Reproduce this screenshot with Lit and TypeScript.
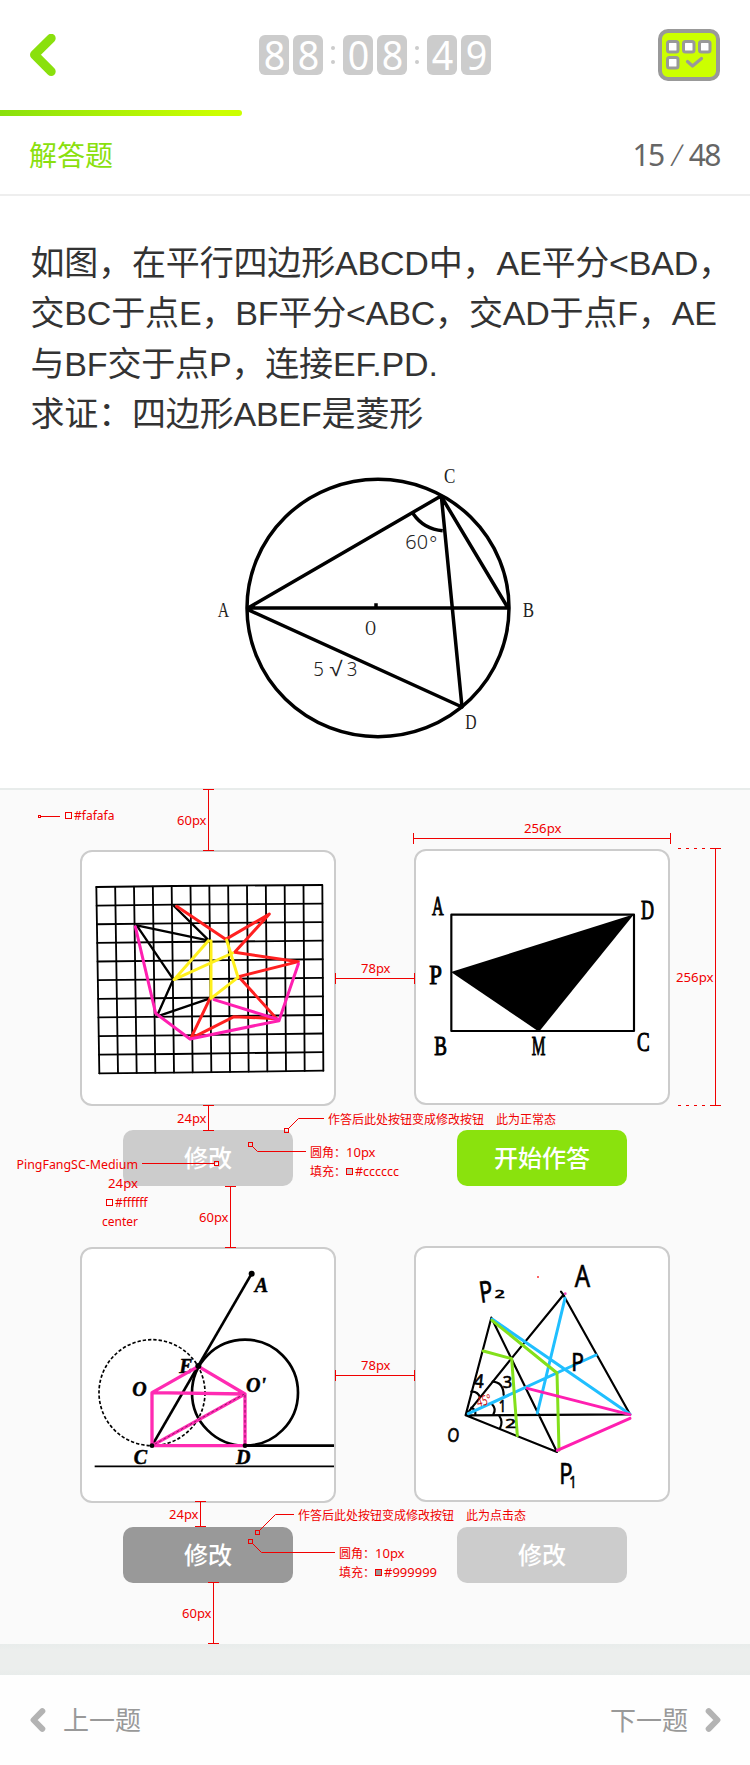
import { LitElement, html, svg, css } from "lit";
import { customElement, property } from "lit/decorators.js";

const RED = "#f00000";

type Pt = [number, number];

/* ---------- geometry figures ---------- */

@customElement("circle-figure")
class CircleFigure extends LitElement {
  static styles = css`
    :host { display: block; }
    svg { display: block; }
    .ink { fill: none; stroke: #000; stroke-width: 10.5; stroke-linejoin: round; }
    .label { font-family: "Liberation Serif", serif; font-size: 66px; fill: #222; }
    .num { font-family: "Noto Sans", sans-serif; font-weight: 300; font-size: 62px; fill: #222; }
  `;
  render() {
    const labels: [string, number, number, number][] = [
      ["C", 732, 99, 34], ["60", 616, 298, 68], ["°", 688, 304, 24], ["A", 53, 501, 34],
      ["B", 968, 501, 34], ["O", 496, 554, 32], ["5", 340, 678, 32], ["√", 388, 678, 40],
      ["3", 440, 678, 32], ["D", 796, 836, 34],
    ];
    return html`<svg width="350" height="300" viewBox="0 0 1050 900">
      <ellipse class="ink" cx="534" cy="474" rx="393" ry="386" />
      <path class="ink" d="M924 474H144L723 138L924 474M144 479L786 771L724 138M528 474V460M640 192Q672 238 728 242" />
      ${labels.map(([t, x, y, w]) => svg`<text class=${/[0-9°√]/.test(t) ? "num" : "label"} x=${x} y=${y} textLength=${w} lengthAdjust="spacingAndGlyphs">${t}</text>`)}
    </svg>`;
  }
}

@customElement("grid-figure")
class GridFigure extends LitElement {
  static styles = css`
    :host, svg { display: block; }
    .line { fill: none; stroke-linejoin: round; stroke-linecap: round; }
    .grid { stroke: #000; stroke-width: 5.5; }
    .black { stroke: #000; stroke-width: 7; }
    .red { stroke: #ff2020; stroke-width: 9; }
    .pink { stroke: #ff1fb0; stroke-width: 9; }
    .yellow { stroke: #fff01c; stroke-width: 9; }
  `;
  render() {
    const cols = Array.from({ length: 13 }, (_, i) => i / 12);
    const rows = Array.from({ length: 11 }, (_, i) => i / 10);
    return html`<svg width="252" height="252" viewBox="246 216 756 756">
      ${cols.map(t => svg`<line class="line grid" x1=${289 + 678 * t} y1=${321 - 4 * t} x2=${298 + 672 * t} y2=${880 - 8 * t} />`)}
      ${rows.map(t => svg`<path class="line grid" d="M${289 + 9 * t} ${321 + 559 * t}L${520 + 3 * t} ${318 + 560 * t}L${967 + 3 * t} ${315 + 557 * t}" />`)}
      <path class="line black" d="M522 378L627 482L410 436L520 598L470 710L630 655" />
      <path class="line red" d="M530 379L677 478L808 402L704 517L895 545L716 590L830 716L702 710L572 776L630 655" />
      <path class="line pink" d="M406 440L467 700L570 777L837 722L895 552M642 659L837 719" />
      <path class="line yellow" d="M625 482L522 599L698 519M633 482V655L714 592L680 480" />
    </svg>`;
  }
}

@customElement("rect-figure")
class RectFigure extends LitElement {
  static styles = css`
    :host, svg { display: block; }
    .frame { fill: none; stroke: #000; stroke-width: 6.5; stroke-linejoin: round; }
    .label { font-family: "Liberation Serif", serif; font-size: 79px; fill: #000; stroke: #000; stroke-width: 3; }
  `;
  render() {
    const labels: [string, number, number, number][] = [
      ["A", 171, 406, 35], ["D", 798, 417, 39], ["P", 163, 612, 38],
      ["B", 178, 824, 38], ["M", 470, 826, 41], ["C", 786, 812, 38],
    ];
    return html`<svg width="252" height="252" viewBox="123 213 756 756">
      <rect class="frame" x="229" y="404" width="548" height="349" />
      <path d="M228 576L777 403L492 755Z" />
      ${labels.map(([t, x, y, w]) => svg`<text class="label" x=${x} y=${y} textLength=${w} lengthAdjust="spacingAndGlyphs">${t}</text>`)}
    </svg>`;
  }
}

@customElement("tangent-figure")
class TangentFigure extends LitElement {
  static styles = css`
    :host, svg { display: block; }
    .ink { fill: none; stroke: #000; }
    .bold { stroke-width: 8; }
    .thin { stroke-width: 5; }
    .dots { stroke-width: 5; stroke-dasharray: 10 6; }
    .pink { fill: none; stroke: #ff2bb2; stroke-width: 10; stroke-linejoin: round; }
    .guide { fill: none; stroke: #50103a; stroke-width: 2; stroke-dasharray: 8 7; }
    .label { font: italic bold 60px "Liberation Serif", serif; fill: #000; stroke: #000; stroke-width: 1.5; }
  `;
  render() {
    return html`<svg width="252" height="252" viewBox="66 42 756 756">
      <circle class="ink dots" cx="276" cy="473" r="159" />
      <circle class="ink bold" cx="555" cy="473" r="159" />
      <path class="ink bold" d="M575 116L276 632" />
      <path class="ink bold" d="M276 632H822" />
      <path class="ink thin" d="M104 694H822" />
      <text class="label" x="358" y="415">E</text>
      <path class="pink" d="M276 473L415 394L555 477L276 473V632H555V477L276 632" />
      <path class="guide" d="M553 477L280 630M555 480V630" />
      <circle cx="575" cy="116" r="9" /><circle cx="415" cy="393" r="9" />
      <circle cx="276" cy="632" r="7" /><circle cx="555" cy="632" r="7" />
      <text class="label" x="584" y="172">A</text>
      <text class="label" x="217" y="482">O</text>
      <text class="label" x="558" y="472">O'</text>
      <text class="label" x="221" y="687">C</text>
      <text class="label" x="528" y="687">D</text>
    </svg>`;
  }
}

@customElement("sketch-figure")
class SketchFigure extends LitElement {
  static styles = css`
    :host, svg { display: block; }
    .line { fill: none; stroke-linejoin: round; stroke-linecap: round; }
    .black { stroke: #000; stroke-width: 6.5; }
    .blue { stroke: #20bfff; stroke-width: 9; }
    .green { stroke: #83e01b; stroke-width: 9; }
    .pink { stroke: #ff1fb0; stroke-width: 9; }
    .label { font-family: "Noto Sans", sans-serif; fill: #000; stroke: #000; stroke-width: 2; }
    .mark { font-family: "Noto Sans", sans-serif; font-size: 42px; fill: #d01010; }
  `;
  render() {
    const labels: [string, number, number, number, number, number][] = [
      ["P", 242, 203, 88, 40, -8], ["2", 284, 190, 30, 30, 0], ["A", 524, 157, 92, 46, 0],
      ["P", 514, 409, 74, 38, 0], ["O", 140, 618, 56, 36, 6], ["P", 478, 746, 88, 40, 0],
      ["1", 508, 758, 50, 22, 0], ["4", 220, 456, 56, 30, 6], ["3", 308, 460, 48, 28, 0],
      ["1", 296, 530, 46, 22, 0], ["2", 316, 578, 38, 32, 0],
    ];
    return html`<svg width="252" height="252" viewBox="48 39 756 756">
      <path class="line black" d="M197 540L274 248L471 651L197 541L334 371L490 180L690 538L197 541M483 170L492 182" />
      <path class="line black" d="M214 470Q232 468 240 486M278 440Q310 442 311 480M276 508Q290 522 280 538M298 543Q310 560 300 580M214 518Q228 524 226 538" />
      <path class="line blue" d="M205 536L588 360M276 252L690 538M495 190L412 534" />
      <path class="line green" d="M250 348L335 371L352 602M276 256L471 414L477 646" />
      <path class="line pink" d="M382 460L690 539M472 646L690 550" />
      ${labels.map(([t, x, y, size, w, r]) => svg`<text class="label" x=${x} y=${y} font-size=${size} textLength=${w} lengthAdjust="spacingAndGlyphs" transform="rotate(${r} ${x} ${y})">${t}</text>`)}
      <text class="mark" x="234" y="516" textLength="44" lengthAdjust="spacingAndGlyphs" transform="rotate(-14 234 516)">45°</text>
      <circle cx="414" cy="126" r="3" fill="#f33" /><circle cx="496" cy="176" r="4" fill="#e4b" />
    </svg>`;
  }
}

/* ---------- design callouts laid over the page ---------- */

@customElement("spec-overlay")
class SpecOverlay extends LitElement {
  static styles = css`
    :host { position: absolute; inset: 0; pointer-events: none; }
    svg { display: block; }
    .rule { fill: none; stroke: #f00000; stroke-width: 1; shape-rendering: crispEdges; }
    .lead { fill: none; stroke: #f00000; stroke-width: 1; }
    .latin { font: 13px "Noto Sans", sans-serif; fill: #f00000; }
    .cjk { font: 12px "Noto Sans CJK SC", sans-serif; fill: #f00000; }
  `;
  private v = (x: number, y1: number, y2: number) =>
    svg`<path class="rule" d="M${x} ${y1}V${y2}M${x - 5.5} ${y1}h11M${x - 5.5} ${y2}h11" />`;
  private h = (y: number, x1: number, x2: number) =>
    svg`<path class="rule" d="M${x1} ${y}H${x2}M${x1} ${y - 5.5}v11M${x2} ${y - 5.5}v11" />`;
  private t = (s: string, x1: number, x2: number, y: number) =>
    svg`<text class="latin" x=${x1} y=${y} textLength=${x2 - x1} lengthAdjust="spacingAndGlyphs">${s}</text>`;
  private c = (s: string, x: number, y: number) => svg`<text class="cjk" x=${x} y=${y}>${s}</text>`;
  private pin = (x: number, y: number, s = 4) =>
    svg`<rect x=${x - s / 2} y=${y - s / 2} width=${s} height=${s} fill="none" stroke=${RED} />`;
  private swatch = (x: number, y: number, color: string) =>
    svg`<rect x=${x} y=${y} width="6" height="6" fill=${color} stroke=${RED} />`;
  private lead = (...p: Pt[]) => svg`<polyline class="lead" points=${p.map(q => q.join(",")).join(" ")} />`;

  render() {
    const { v, h, t, c, pin, swatch, lead } = this;
    return html`<svg width="750" height="1765" viewBox="0 0 750 1765">
      ${pin(39.5, 816.5, 2)}${lead([41, 816.5], [60, 816.5])}${swatch(65.5, 812.5, "#fafafa")}${t("#fafafa", 74, 114.5, 820)}
      ${v(208.5, 789.5, 850.5)}${t("60px", 177, 206.5, 825)}
      ${h(838.5, 413.5, 670.5)}${t("256px", 524, 561.5, 833)}
      ${v(715.5, 848.5, 1105.5)}${t("256px", 676, 713.5, 982)}
      <path class="rule" d="M678 848.5H711M678 1105.5H711" stroke-dasharray="3 5" />
      ${h(978.5, 335.5, 414.5)}${t("78px", 361, 390.5, 973)}
      ${v(208.5, 1105.5, 1130.5)}${t("24px", 177, 206.5, 1123)}
      ${pin(286.5, 1130.5)}${lead([288.5, 1128.5], [298.5, 1118.5], [324, 1118.5])}
      ${c("作答后此处按钮变成修改按钮　此为正常态", 328, 1124)}
      ${pin(250.5, 1144.5)}${lead([252.5, 1146.5], [257.5, 1151.5], [306, 1151.5])}
      ${c("圆角：", 310, 1157)}${t("10px", 346, 375.5, 1157)}
      ${c("填充：", 310, 1176)}${swatch(346.5, 1168.5, "#ccc")}${t("#cccccc", 355, 399, 1176)}
      ${t("PingFangSC-Medium", 16.5, 138, 1169)}${lead([142, 1163.5], [214, 1163.5])}${pin(216.5, 1163.5)}
      ${t("24px", 108, 138, 1188)}
      ${swatch(106.5, 1199.5, "#fff")}${t("#ffffff", 115, 147.5, 1207)}
      ${t("center", 102, 138, 1226)}
      ${v(230.5, 1186.5, 1247.5)}${t("60px", 199, 228.5, 1222)}
      ${h(1375.5, 335.5, 414.5)}${t("78px", 361, 390.5, 1370)}
      ${v(200.5, 1501.5, 1526.5)}${t("24px", 169, 198.5, 1519)}
      ${pin(257.5, 1532.5)}${lead([259.5, 1530.5], [275.5, 1514.5], [294, 1514.5])}
      ${c("作答后此处按钮变成修改按钮　此为点击态", 298, 1520)}
      ${pin(250.5, 1541.5)}${lead([252.5, 1543.5], [261.5, 1552.5], [335, 1552.5])}
      ${c("圆角：", 339, 1558)}${t("10px", 375, 404.5, 1558)}
      ${c("填充：", 339, 1577)}${swatch(375.5, 1569.5, "#999")}${t("#999999", 384, 437, 1577)}
      ${v(213.5, 1582.5, 1643.5)}${t("60px", 182, 211.5, 1618)}
    </svg>`;
  }
}

/* ---------- answer card ---------- */

@customElement("answer-item")
class AnswerItem extends LitElement {
  @property() label = "";
  @property() tone = "idle";
  static styles = css`
    :host { display: flex; flex-direction: column; align-items: center; justify-content: space-between; height: 337px; }
    .card { box-sizing: border-box; width: 256px; height: 256px; border: 2px solid #ccc; border-radius: 12px; background: #fff; overflow: hidden; }
    .btn { box-sizing: border-box; width: 170px; height: 56px; padding: 0 0 3px; border: 0; border-radius: 10px; color: #fff; font: 500 24px/36px "Noto Sans CJK SC", sans-serif; }
    .idle { background: #ccc; }
    .pressed { background: #999; }
    .start { background: #8ae20d; }
  `;
  render() {
    return html`<div class="card"><slot></slot></div><button class="btn ${this.tone}">${this.label}</button>`;
  }
}

/* ---------- page ---------- */

@customElement("app-root")
class AppRoot extends LitElement {
  static styles = css`
    :host { display: block; position: relative; width: 750px; height: 1765px; overflow: hidden; background: #fff; font-family: "Noto Sans CJK SC", sans-serif; }
    svg { display: block; }
    .top { display: flex; align-items: center; justify-content: space-between; height: 110px; padding: 0 30px; box-sizing: border-box; }
    .back { width: 62px; }
    .clock { display: flex; gap: 4px; }
    .digit { width: 30px; height: 40px; border-radius: 6px; background: #ccc; color: #fff; font: 40px/39px "Noto Sans", sans-serif; text-align: center; }
    .glyph { display: inline-block; transform: scaleX(0.94); }
    .colon { display: flex; flex-direction: column; align-items: center; justify-content: center; gap: 10px; width: 12px; }
    .dot { width: 4px; height: 4px; border-radius: 50%; background: #ccc; }
    .progress { width: 242px; height: 6px; border-radius: 0 3px 3px 0; background: linear-gradient(90deg, #8ae00d, #cf0 90%); }
    .heading { display: flex; align-items: center; justify-content: space-between; height: 78px; padding: 0 30px 0 29px; border-bottom: 2px solid #eee; }
    .kind { color: #8ae00d; font-size: 28px; padding-bottom: 2px; }
    .count { display: flex; gap: 8px; color: #666; font: 30px "Noto Sans", sans-serif; letter-spacing: -1.5px; padding-bottom: 1px; }
    .slash { font-weight: 300; transform: skewX(-10deg); }
    .question { padding: 42px 0 0 30.5px; height: 592px; box-sizing: border-box; color: #333; font: 34px/50px "Liberation Sans", "Noto Sans CJK SC", sans-serif; letter-spacing: -0.17px; }
    .row { height: 50.3px; white-space: nowrap; }
    .diagram { padding: 11px 0 0 169.5px; letter-spacing: 0; }
    .panel { display: grid; grid-template-columns: 256px 256px; align-content: start; column-gap: 78px; row-gap: 60px; height: 856px; box-sizing: border-box; padding: 59px 80px 0; border-top: 2px solid #e8eceb; background: #fafafa; }
    .low { height: 336px; margin-top: 1px; }
    .strip { height: 31px; background: linear-gradient(#e8eceb, #eceeed 20%, #eceeed 80%, #e8eceb); }
    .footer { display: flex; align-items: center; justify-content: space-between; box-sizing: border-box; height: 90px; padding: 0 29px 1px 30px; background: #fefefe; }
    .nav { display: flex; align-items: center; gap: 17px; color: #999; font-size: 26px; line-height: 40px; }
    .word { padding-bottom: 1px; }
  `;
  render() {
    const digit = (d: string) => html`<div class="digit"><span class="glyph">${d}</span></div>`;
    const colon = html`<div class="colon"><i class="dot"></i><i class="dot"></i></div>`;
    return html`
      <header class="top">
        <div class="back"><svg width="27" height="42" viewBox="0 0 27 42"><path d="M21.2 4.2L4.5 20.8L21.2 37.5" fill="none" stroke="#8ae00d" stroke-width="9" stroke-linecap="round" stroke-linejoin="round" /></svg></div>
        <div class="clock">${digit("8")}${digit("8")}${colon}${digit("0")}${digit("8")}${colon}${digit("4")}${digit("9")}</div>
        <svg width="62" height="52" viewBox="0 0 62 52">
          <rect x="2" y="2" width="58" height="48" rx="8" fill="#cf0" stroke="#999" stroke-width="4" />
          ${[[9.5, 12.5], [25.5, 12.5], [41.5, 12.5], [9.5, 28.5]].map(([x, y]) => svg`<rect x=${x} y=${y} width="10.5" height="10.5" rx="2" fill="#fff" stroke="#999" stroke-width="3" />`)}
          <path d="M29.5 32.5L34.5 37L43.5 29.5" fill="none" stroke="#999" stroke-width="3.2" stroke-linecap="round" stroke-linejoin="round" />
        </svg>
      </header>
      <div class="progress"></div>
      <div class="heading"><span class="kind">解答题</span><span class="count"><span>15</span><span class="slash">/</span><span>48</span></span></div>
      <section class="question">
        <div class="row">如图，在平行四边形ABCD中，AE平分&lt;BAD，</div>
        <div class="row">交BC于点E，BF平分&lt;ABC，交AD于点F，AE</div>
        <div class="row">与BF交于点P，连接EF.PD.</div>
        <div class="row">求证：四边形ABEF是菱形</div>
        <circle-figure class="diagram"></circle-figure>
      </section>
      <main class="panel">
        <answer-item class="low" label="修改"><grid-figure></grid-figure></answer-item>
        <answer-item label="开始作答" tone="start"><rect-figure></rect-figure></answer-item>
        <answer-item class="low" label="修改" tone="pressed"><tangent-figure></tangent-figure></answer-item>
        <answer-item label="修改"><sketch-figure></sketch-figure></answer-item>
      </main>
      <div class="strip"></div>
      <footer class="footer">
        <div class="nav"><svg width="16" height="24" viewBox="0 0 16 24"><path d="M12.3 3.2L3.6 12L12.3 20.8" fill="none" stroke="#b3b3b3" stroke-width="6" stroke-linecap="round" stroke-linejoin="round" /></svg><span class="word">上一题</span></div>
        <div class="nav"><span class="word">下一题</span><svg width="16" height="24" viewBox="0 0 16 24"><path d="M3.7 3.2L12.4 12L3.7 20.8" fill="none" stroke="#b3b3b3" stroke-width="6" stroke-linecap="round" stroke-linejoin="round" /></svg></div>
      </footer>
      <spec-overlay></spec-overlay>
    `;
  }
}
